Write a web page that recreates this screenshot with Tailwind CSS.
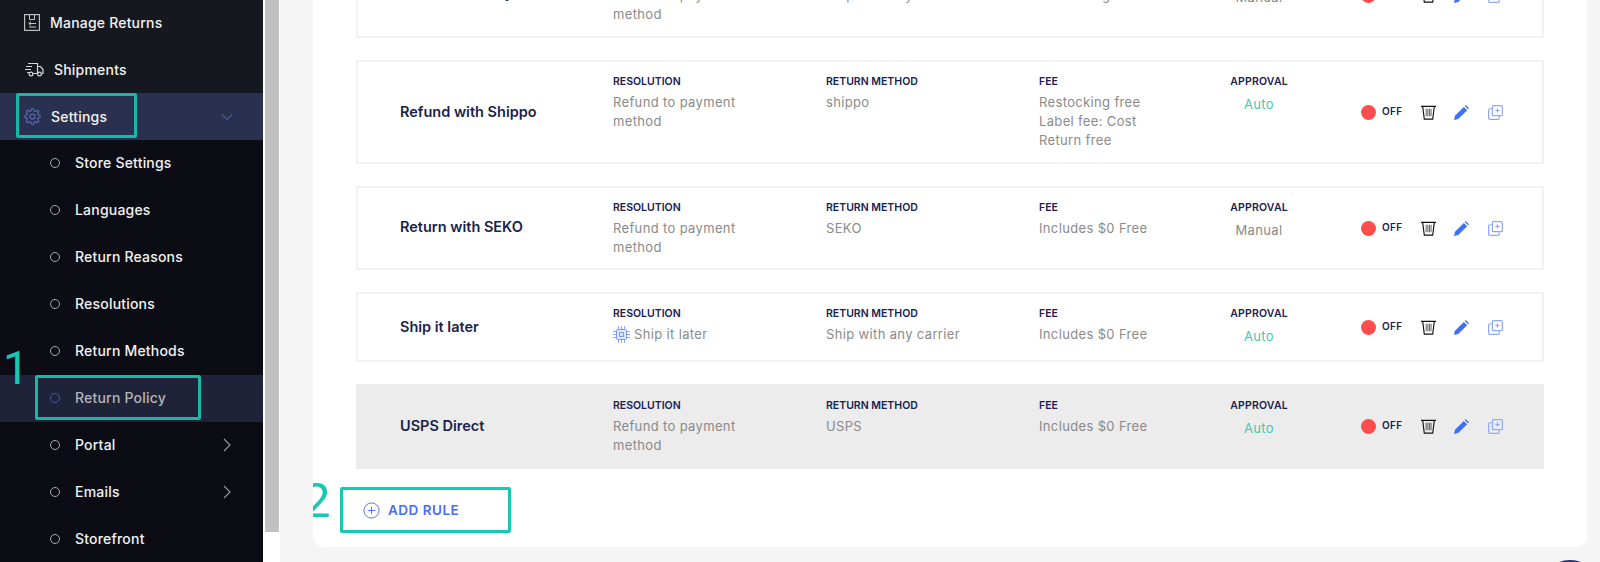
<!DOCTYPE html>
<html lang="en">
<head>
<meta charset="UTF-8">
<meta name="viewport" content="width=device-width, initial-scale=1.0">
<script src="https://cdn.jsdelivr.net/npm/@tailwindcss/browser@4"></script>
<title>Return Policy</title>
</head>
<body class="h-[562px] overflow-hidden bg-[#f5f5f5] font-['Inter',sans-serif]">
<svg class="hidden">
  <symbol id="trash" viewBox="0 0 16 16"><path d="M0 1.500h16M1.800 1.500 3.500 15h9l1.700-13.500" fill="none" stroke="#111" stroke-width="1.200"/><path d="M5.500 4v8M7.300 4v8M9 4v8M10.700 4v8" stroke="#444" stroke-width=".9"/></symbol>
  <symbol id="pencil" viewBox="0 0 16 16"><path d="M0 16l1-4.500L10.500 2 14 5.500 4.500 15zM11.500 1l1-1L16 3.500l-1 1z" fill="#3f6ff5"/></symbol>
  <symbol id="copy" viewBox="0 0 16 16"><rect x="4.700" y=".700" width="10.600" height="10.600" rx="1" fill="none" stroke="#8fa8fa" stroke-width="1.300"/><path d="M4 4H2a1.300 1.300 0 0 0-1.300 1.300V14A1.300 1.300 0 0 0 2 15.300h8.700A1.300 1.300 0 0 0 12 14v-2" fill="none" stroke="#8fa8fa" stroke-width="1.300"/><path d="M10 3.500v4.500M7.800 5.800h4.500" stroke="#7f9bf8" stroke-width="1"/></symbol>
  <symbol id="chev-r" viewBox="0 0 10 14"><path d="M2 1l6 6-6 6" fill="none" stroke="#9a9aa0" stroke-width="1.100"/></symbol>
</svg>

<div class="flex h-[562px]">
  <!-- sidebar -->
  <aside class="relative w-[263px] shrink-0 overflow-hidden bg-[#0c0d14] text-[14px] font-medium tracking-[.2px] text-[#f2f2f2]">
    <div class="mt-[-1px] bg-[#16181f]">
      <a class="flex h-[47px] items-center gap-[10px] pb-[1px] pl-[24px]">
        <svg width="16" height="17" viewBox="0 0 16 17" fill="none" stroke="#c9c9c9" stroke-width="1.100"><rect x=".6" y=".6" width="14.800" height="15.800"/><path d="M5.500 1v4.500h5V1" stroke-width="1"/><path d="M12 9.500H5M7 7.500l-2.200 2L7 11.500M5 13h7" stroke-width="1"/></svg>
        Manage Returns
      </a>
      <a class="flex h-[47px] items-center gap-[10px] pl-[25px]">
        <svg width="19" height="15" viewBox="0 0 19 15" fill="none" stroke="#d5d5d5" stroke-width="1.200"><path d="M3 1.500h9.500v10H8M12.500 4.500h3l2.500 3v4h-1.500M12.500 11.500h.5M1 4.500h6M0 7.500h6M2 10.500h2"/><circle cx="6" cy="12" r="1.900"/><circle cx="14.500" cy="12" r="1.900"/></svg>
        Shipments
      </a>
    </div>
    <a class="flex h-[47px] items-center bg-[#2a3050] pl-[24px] pr-[30px]">
      <svg width="17" height="17" viewBox="0 0 24 24" fill="none" stroke="#5468ad" stroke-width="1.800"><circle cx="12" cy="12" r="3.500"/><path d="M19.400 15a1.700 1.700 0 0 0 .3 1.800l.1.100a2 2 0 1 1-2.800 2.800l-.1-.1a1.700 1.700 0 0 0-2.900 1.200V21a2 2 0 1 1-4 0v-.1a1.700 1.700 0 0 0-2.900-1.200l-.1.100a2 2 0 1 1-2.800-2.800l.1-.1a1.700 1.700 0 0 0-1.200-2.900H3a2 2 0 1 1 0-4h.1a1.700 1.700 0 0 0 1.200-2.900l-.1-.1a2 2 0 1 1 2.800-2.800l.1.100a1.700 1.700 0 0 0 2.900-1.200V3a2 2 0 1 1 4 0v.1a1.700 1.700 0 0 0 2.900 1.200l.1-.1a2 2 0 1 1 2.800 2.800l-.1.100a1.700 1.700 0 0 0 1.200 2.900h.1a2 2 0 1 1 0 4h-.1a1.700 1.700 0 0 0-1.500 1z"/></svg>
      <span class="ml-[10px] flex-1">Settings</span>
      <svg width="12" height="8" viewBox="0 0 12 8"><path d="M1 1.500l5 5 5-5" fill="none" stroke="#4a5a9a" stroke-width="1.100"/></svg>
    </a>
    <ul>
      <li class="flex h-[47px] items-center pb-[2px] pl-[50px]"><span class="mr-[15px] size-[10px] rounded-full border-[1.500px] border-[#aaa]"></span>Store Settings</li>
      <li class="flex h-[47px] items-center pb-[2px] pl-[50px]"><span class="mr-[15px] size-[10px] rounded-full border-[1.500px] border-[#aaa]"></span>Languages</li>
      <li class="flex h-[47px] items-center pb-[2px] pl-[50px]"><span class="mr-[15px] size-[10px] rounded-full border-[1.500px] border-[#aaa]"></span>Return Reasons</li>
      <li class="flex h-[47px] items-center pb-[2px] pl-[50px]"><span class="mr-[15px] size-[10px] rounded-full border-[1.500px] border-[#aaa]"></span>Resolutions</li>
      <li class="flex h-[47px] items-center pb-[2px] pl-[50px]"><span class="mr-[15px] size-[10px] rounded-full border-[1.500px] border-[#aaa]"></span>Return Methods</li>
      <li class="flex h-[47px] items-center bg-[#1e2339] pb-[2px] pl-[50px] text-[#b5b5b8]"><span class="mr-[15px] size-[10px] rounded-full border-[1.500px] border-[#4a5a9a]"></span>Return Policy</li>
      <li class="flex h-[47px] items-center pb-[2px] pl-[50px] pr-[31px]"><span class="mr-[15px] size-[10px] rounded-full border-[1.500px] border-[#aaa]"></span><span class="flex-1">Portal</span><svg width="10" height="14"><use href="#chev-r"/></svg></li>
      <li class="flex h-[47px] items-center pb-[2px] pl-[50px] pr-[31px]"><span class="mr-[15px] size-[10px] rounded-full border-[1.500px] border-[#aaa]"></span><span class="flex-1">Emails</span><svg width="10" height="14"><use href="#chev-r"/></svg></li>
      <li class="flex h-[47px] items-center pb-[2px] pl-[50px]"><span class="mr-[15px] size-[10px] rounded-full border-[1.500px] border-[#aaa]"></span>Storefront</li>
    </ul>
    <!-- tutorial annotations -->
    <div class="absolute left-[16px] top-[93px] h-[45px] w-[121px] rounded-[2px] border-[3px] border-[#17b8a6]"></div>
    <div class="absolute left-[35px] top-[375px] h-[45px] w-[166px] rounded-[2px] border-[3px] border-[#17b8a6]"></div>
    <div class="absolute left-[3px] top-[345px] font-['Roboto',sans-serif] text-[46px] font-normal leading-[46px] text-[#17c9b3]">1</div>
  </aside>

  <!-- page scrollbar -->
  <div class="w-[17px] shrink-0 bg-white pl-[2px]"><div class="h-[532px] w-[14px] bg-[#c1c1c1]"></div></div>

  <!-- content -->
  <main class="flex-1 pl-[33px] pr-[13px]">
    <div class="h-[547px] overflow-hidden rounded-b-[10px] bg-white px-[43px]">
      <div class="mt-[-47px] flex flex-col gap-[22px] text-[13px] leading-[19px] tracking-[.35px] text-[#8a8a8a]">

        <section class="grid h-[85px] grid-cols-[213px_213px_213px_175px_90px_1fr] border-2 border-[#f2f2f2] pl-[42px] pt-[13px]">
          <h3 class="self-center pb-[20px] text-[14.500px] font-semibold tracking-normal text-[#1a1f4b]">Refund with any carrier</h3>
          <div><p class="h-[14px] text-[10.500px] font-semibold leading-[14px] tracking-normal text-[#1a2050]">RESOLUTION</p><p class="mt-[4px]">Refund to payment<br>method</p></div>
          <div><p class="h-[14px] text-[10.500px] font-semibold leading-[14px] tracking-normal text-[#1a2050]">RETURN METHOD</p><p class="mt-[4px]">Ship with any carrier</p></div>
          <div><p class="h-[14px] text-[10.500px] font-semibold leading-[14px] tracking-normal text-[#1a2050]">FEE</p><p class="mt-[4px]">Restocking free</p></div>
          <div class="text-center"><p class="h-[14px] text-[10.500px] font-semibold leading-[14px] tracking-[.2px] text-[#1a2050]">APPROVAL</p><p class="mt-[6px]">Manual</p></div>
          <div class="flex items-center self-center pb-[13px] pl-[57px]">
            <span class="size-[15px] shrink-0 rounded-full bg-[#ff4d4d]"></span><span class="mb-[2px] ml-[6px] text-[10px] font-semibold text-[#1a2050]">OFF</span>
            <svg class="ml-[18px] shrink-0" width="15" height="15"><use href="#trash"/></svg><svg class="ml-[18px] shrink-0" width="15" height="15"><use href="#pencil"/></svg><svg class="ml-[19px] shrink-0" width="15" height="15"><use href="#copy"/></svg>
          </div>
        </section>

        <section class="grid h-[104px] grid-cols-[213px_213px_213px_175px_90px_1fr] border-2 border-[#f2f2f2] pl-[42px] pt-[13px]">
          <h3 class="self-center pb-[15px] text-[14.500px] font-semibold tracking-normal text-[#1a1f4b]">Refund with Shippo</h3>
          <div><p class="h-[14px] text-[10.500px] font-semibold leading-[14px] tracking-normal text-[#1a2050]">RESOLUTION</p><p class="mt-[4px]">Refund to payment<br>method</p></div>
          <div><p class="h-[14px] text-[10.500px] font-semibold leading-[14px] tracking-normal text-[#1a2050]">RETURN METHOD</p><p class="mt-[4px]">shippo</p></div>
          <div><p class="h-[14px] text-[10.500px] font-semibold leading-[14px] tracking-normal text-[#1a2050]">FEE</p><p class="mt-[4px]">Restocking free<br>Label fee: Cost<br>Return free</p></div>
          <div class="text-center"><p class="h-[14px] text-[10.500px] font-semibold leading-[14px] tracking-[.2px] text-[#1a2050]">APPROVAL</p><p class="mt-[6px] text-[#3fc9b0]">Auto</p></div>
          <div class="flex items-center self-center pb-[13px] pl-[57px]">
            <span class="size-[15px] shrink-0 rounded-full bg-[#ff4d4d]"></span><span class="mb-[2px] ml-[6px] text-[10px] font-semibold text-[#1a2050]">OFF</span>
            <svg class="ml-[18px] shrink-0" width="15" height="15"><use href="#trash"/></svg><svg class="ml-[18px] shrink-0" width="15" height="15"><use href="#pencil"/></svg><svg class="ml-[19px] shrink-0" width="15" height="15"><use href="#copy"/></svg>
          </div>
        </section>

        <section class="grid h-[84px] grid-cols-[213px_213px_213px_175px_90px_1fr] border-2 border-[#f2f2f2] pl-[42px] pt-[13px]">
          <h3 class="self-center pb-[17px] text-[14.500px] font-semibold tracking-normal text-[#1a1f4b]">Return with SEKO</h3>
          <div><p class="h-[14px] text-[10.500px] font-semibold leading-[14px] tracking-normal text-[#1a2050]">RESOLUTION</p><p class="mt-[4px]">Refund to payment<br>method</p></div>
          <div><p class="h-[14px] text-[10.500px] font-semibold leading-[14px] tracking-normal text-[#1a2050]">RETURN METHOD</p><p class="mt-[4px]">SEKO</p></div>
          <div><p class="h-[14px] text-[10.500px] font-semibold leading-[14px] tracking-normal text-[#1a2050]">FEE</p><p class="mt-[4px]">Includes $0 Free</p></div>
          <div class="text-center"><p class="h-[14px] text-[10.500px] font-semibold leading-[14px] tracking-[.2px] text-[#1a2050]">APPROVAL</p><p class="mt-[6px]">Manual</p></div>
          <div class="flex items-center self-center pb-[13px] pl-[57px]">
            <span class="size-[15px] shrink-0 rounded-full bg-[#ff4d4d]"></span><span class="mb-[2px] ml-[6px] text-[10px] font-semibold text-[#1a2050]">OFF</span>
            <svg class="ml-[18px] shrink-0" width="15" height="15"><use href="#trash"/></svg><svg class="ml-[18px] shrink-0" width="15" height="15"><use href="#pencil"/></svg><svg class="ml-[19px] shrink-0" width="15" height="15"><use href="#copy"/></svg>
          </div>
        </section>

        <section class="grid h-[70px] grid-cols-[213px_213px_213px_175px_90px_1fr] border-2 border-[#f2f2f2] pl-[42px] pt-[13px]">
          <h3 class="self-center pb-[15px] text-[14.500px] font-semibold tracking-normal text-[#1a1f4b]">Ship it later</h3>
          <div><p class="h-[14px] text-[10.500px] font-semibold leading-[14px] tracking-normal text-[#1a2050]">RESOLUTION</p><p class="mt-[4px] flex items-center gap-[4px]">
            <svg width="17" height="17" viewBox="0 0 17 17" fill="none" stroke="#7a9bf5"><rect x="3.500" y="3.500" width="10" height="10" rx="1" fill="#dfe7fd"/><rect x="6.500" y="6.500" width="4" height="4"/><path d="M5.500 0v3M8.500 0v3M11.500 0v3M5.500 14v3M8.500 14v3M11.500 14v3M0 5.500h3M0 8.500h3M0 11.500h3M14 5.500h3M14 8.500h3M14 11.500h3" stroke-width=".9"/></svg>Ship it later</p></div>
          <div><p class="h-[14px] text-[10.500px] font-semibold leading-[14px] tracking-normal text-[#1a2050]">RETURN METHOD</p><p class="mt-[4px]">Ship with any carrier</p></div>
          <div><p class="h-[14px] text-[10.500px] font-semibold leading-[14px] tracking-normal text-[#1a2050]">FEE</p><p class="mt-[4px]">Includes $0 Free</p></div>
          <div class="text-center"><p class="h-[14px] text-[10.500px] font-semibold leading-[14px] tracking-[.2px] text-[#1a2050]">APPROVAL</p><p class="mt-[6px] text-[#3fc9b0]">Auto</p></div>
          <div class="flex items-center self-center pb-[13px] pl-[57px]">
            <span class="size-[15px] shrink-0 rounded-full bg-[#ff4d4d]"></span><span class="mb-[2px] ml-[6px] text-[10px] font-semibold text-[#1a2050]">OFF</span>
            <svg class="ml-[18px] shrink-0" width="15" height="15"><use href="#trash"/></svg><svg class="ml-[18px] shrink-0" width="15" height="15"><use href="#pencil"/></svg><svg class="ml-[19px] shrink-0" width="15" height="15"><use href="#copy"/></svg>
          </div>
        </section>

        <section class="grid h-[85px] grid-cols-[213px_213px_213px_175px_90px_1fr] border-2 border-[#ececec] bg-[#ececec] pl-[42px] pt-[13px]">
          <h3 class="self-center pb-[15px] text-[14.500px] font-semibold tracking-normal text-[#1a1f4b]">USPS Direct</h3>
          <div><p class="h-[14px] text-[10.500px] font-semibold leading-[14px] tracking-normal text-[#1a2050]">RESOLUTION</p><p class="mt-[4px]">Refund to payment<br>method</p></div>
          <div><p class="h-[14px] text-[10.500px] font-semibold leading-[14px] tracking-normal text-[#1a2050]">RETURN METHOD</p><p class="mt-[4px]">USPS</p></div>
          <div><p class="h-[14px] text-[10.500px] font-semibold leading-[14px] tracking-normal text-[#1a2050]">FEE</p><p class="mt-[4px]">Includes $0 Free</p></div>
          <div class="text-center"><p class="h-[14px] text-[10.500px] font-semibold leading-[14px] tracking-[.2px] text-[#1a2050]">APPROVAL</p><p class="mt-[6px] text-[#3fc9b0]">Auto</p></div>
          <div class="flex items-center self-center pb-[13px] pl-[57px]">
            <span class="size-[15px] shrink-0 rounded-full bg-[#ff4d4d]"></span><span class="mb-[2px] ml-[6px] text-[10px] font-semibold text-[#1a2050]">OFF</span>
            <svg class="ml-[18px] shrink-0" width="15" height="15"><use href="#trash"/></svg><svg class="ml-[18px] shrink-0" width="15" height="15"><use href="#pencil"/></svg><svg class="ml-[19px] shrink-0" width="15" height="15"><use href="#copy"/></svg>
          </div>
        </section>
      </div>

      <!-- add rule, with its tutorial marker -->
      <div class="relative ml-[-16px] mt-[18px] w-[171px]">
        <div class="absolute left-[-37px] top-[-10px] font-['Roboto',sans-serif] text-[49px] font-normal leading-[48px] text-[#17c9b3]">2</div>
        <button class="flex h-[46px] w-[171px] items-center gap-[8px] rounded-[2px] border-[3px] border-[#17c9b3] pl-[20px] text-[13.500px] font-semibold tracking-[.5px] text-[#4a6cf7]">
          <svg width="17" height="17" viewBox="0 0 18 18" fill="none" stroke="#4a6cf7"><circle cx="9" cy="9" r="8"/><path d="M9 5v8M5 9h8"/></svg>ADD RULE
        </button>
      </div>
    </div>
  </main>
</div>

<!-- chat launcher, mostly below the fold -->
<div class="fixed left-[1540px] top-[560px] size-[60px] rounded-full bg-[#2a2d6a]"></div>
</body>
</html>
